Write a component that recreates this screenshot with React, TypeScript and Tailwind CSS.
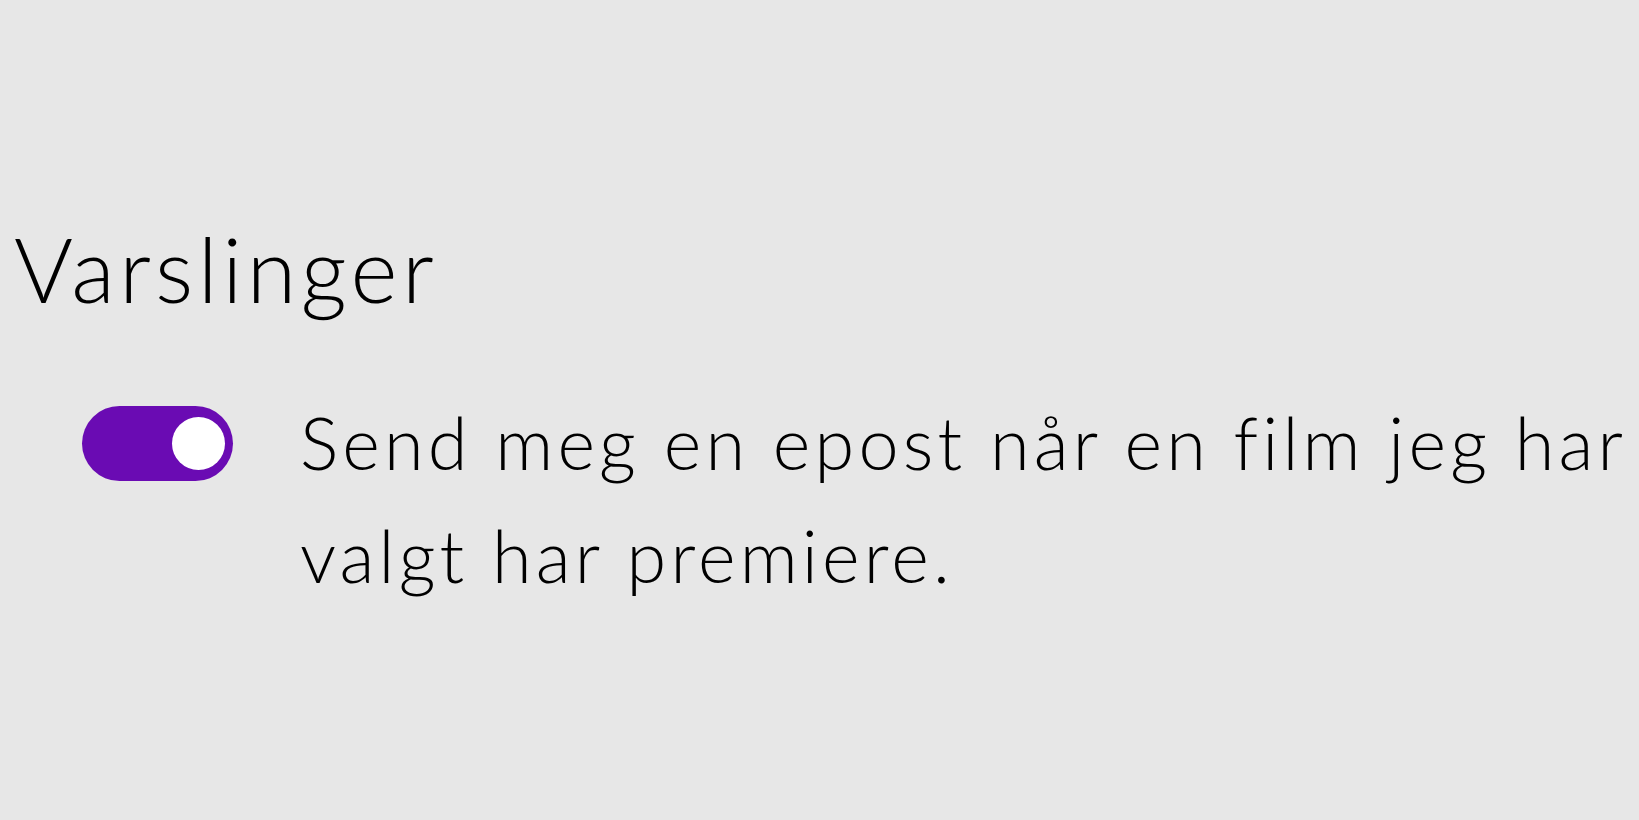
export default function App() {
  return (
    <div className="min-h-screen w-full bg-[#e7e7e7] text-black font-['Lato','Noto_Sans',sans-serif] pt-[223px] pl-[14px]">
      <h2 className="text-[90px] leading-none font-light tracking-[4.5px]">Varslinger</h2>

      {/* varsel-innstilling */}
      <div className="mt-[73px] flex items-start">
        <button
          type="button"
          role="switch"
          aria-checked="true"
          className="ml-[68px] mt-[20px] w-[151px] h-[75px] shrink-0 rounded-full bg-[#6a0bb3] relative"
        >
          <span className="absolute right-[8px] top-[11px] w-[53px] h-[53px] rounded-full bg-white" />
        </button>
        <p className="ml-[67px] pr-[6px] text-[72px] leading-[113px] font-light tracking-[4.15px]">
          Send meg en epost når en film jeg har valgt har premiere.
        </p>
      </div>
    </div>
  );
}
